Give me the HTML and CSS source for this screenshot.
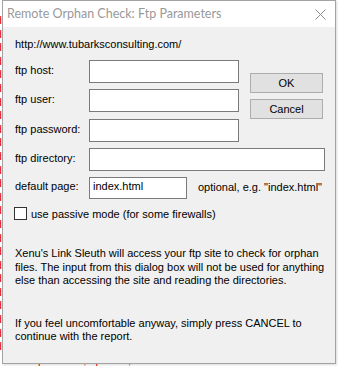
FILE: index.html
```html
<!DOCTYPE html>
<html lang="en">
  <head>
    <meta charset="UTF-8" />
    <title>Remote Orphan Check: Ftp Parameters</title>
    <link rel="stylesheet" href="styles.css">
  </head>
  <body>
    <!-- report window behind the dialog -->
    <div class="report">
      <div>not found</div>
      <div>not found</div>
      <div>not found</div>
      <div>not found</div>
      <div>not found</div>
      <div>not found</div>
      <div>not found</div>
      <div>not found</div>
      <div>not found</div>
      <div>not found</div>
      <div>not found</div>
      <div>not found</div>
      <div>not found</div>
      <div>not found</div>
      <div>not found</div>
      <div>not found</div>
      <div>not found</div>
      <div>not found</div>
      <div>not found</div>
      <div>not found</div>
      <div>not found</div>
      <div>not found</div>
      <div>not found</div>
      <div>not found</div>
      <div>not found</div>
      <div class="last">ftp content, uploads, 20 kB &nbsp; &nbsp; &nbsp; not found</div>
    </div>

    <div class="dialog">
      <div class="title-bar">
        <span class="title">Remote Orphan Check: Ftp Parameters</span>
        <svg class="close" width="11" height="11" viewBox="0 0 11 11">
          <path d="M0.5 0.5 L10.5 10.5 M10.5 0.5 L0.5 10.5" stroke="#8c8c8c" stroke-width="1" fill="none" />
        </svg>
      </div>

      <div class="content">
        <div class="url">http://www.tubarksconsulting.com/</div>

        <div class="form">
          <label class="lbl">ftp host:</label>
          <input class="field" type="text">
          <div class="buttons">
            <button class="btn">OK</button>
            <button class="btn">Cancel</button>
          </div>

          <label class="lbl">ftp user:</label>
          <input class="field" type="text">

          <label class="lbl">ftp password:</label>
          <input class="field" type="password">

          <label class="lbl">ftp directory:</label>
          <input class="field wide" type="text">

          <label class="lbl">default page:</label>
          <div class="page-row">
            <input class="field short" type="text" value="index.html">
            <span class="hint">optional, e.g. "index.html"</span>
          </div>
        </div>

        <label class="passive">
          <span class="box"></span>
          use passive mode (for some firewalls)
        </label>

        <p class="note">Xenu's Link Sleuth will access your ftp site to check for orphan files. The input from this dialog box will not be used for anything else than accessing the site and reading the directories.</p>
        <p class="note second">If you feel uncomfortable anyway, simply press CANCEL to continue with the report.</p>
      </div>
    </div>
  </body>
</html>
```

FILE: styles.css
```css
* {
  box-sizing: border-box;
}

body {
  margin: 0;
  width: 338px;
  height: 367px;
  overflow: hidden;
  position: relative;
  background: #fff;
  font-family: "Liberation Sans", Arial, sans-serif;
  font-size: 11px;
  color: #000;
}

.report {
  margin-left: -44px;
  padding-top: 14px;
  color: #e00000;
  line-height: 13.6px;
  font-size: 11px;
}

.report .last {
  padding-left: 76px;
}

.dialog {
  position: absolute;
  left: 2px;
  top: 0;
  width: 334px;
  height: 364px;
  background: #f0f0f0;
  border: 1px solid #a3a3a3;
  box-shadow: 1px 1px 2px rgba(0, 0, 0, 0.15);
}

.title-bar {
  height: 26px;
  background: #fff;
  display: flex;
  align-items: center;
  justify-content: space-between;
  padding: 0 9px 1px 4px;
}

.title {
  font-family: Lato, "Segoe UI", sans-serif;
  font-size: 12.5px;
  color: #999;
}

.close {
  display: block;
  margin-top: 1px;
}

.content {
  padding: 10px 0 0 12px;
}

.url {
  line-height: 14px;
}

.form {
  margin-top: 9px;
  display: grid;
  grid-template-columns: 74px 150px 11px 73px;
  grid-template-rows: 29px 30px 29px 28px 23px;
}

.lbl {
  grid-column: 1;
  line-height: 21px;
}

.field {
  grid-column: 2;
  height: 23px;
  margin: 0;
  border: 1px solid #7a7a7a;
  background: #fff;
  font-family: inherit;
  font-size: 11px;
  padding: 0 3px;
  outline: none;
}

.field.wide {
  grid-column: 2 / 5;
  width: 236px;
}

.buttons {
  grid-column: 4;
  grid-row: 1 / 3;
  display: flex;
  flex-direction: column;
  gap: 6px;
  padding-top: 13px;
}

.btn {
  height: 21px;
  margin: 0;
  padding: 0;
  border: 1px solid #adadad;
  background: #e1e1e1;
  font-family: inherit;
  font-size: 11px;
  color: #000;
}

.page-row {
  grid-column: 2 / 5;
  display: flex;
  align-items: center;
  gap: 11px;
}

.field.short {
  width: 98px;
  height: 22px;
  padding-bottom: 3px;
}

.hint {
  padding-bottom: 1px;
}

.passive {
  display: flex;
  align-items: center;
  gap: 4px;
  margin-top: 8px;
  margin-left: -1px;
}

.box {
  width: 13px;
  height: 13px;
  border: 1px solid #333;
  background: #fff;
}

.note {
  margin: 27px 0 0 0;
  line-height: 13.5px;
}

.note.second {
  margin-top: 29px;
}
```
